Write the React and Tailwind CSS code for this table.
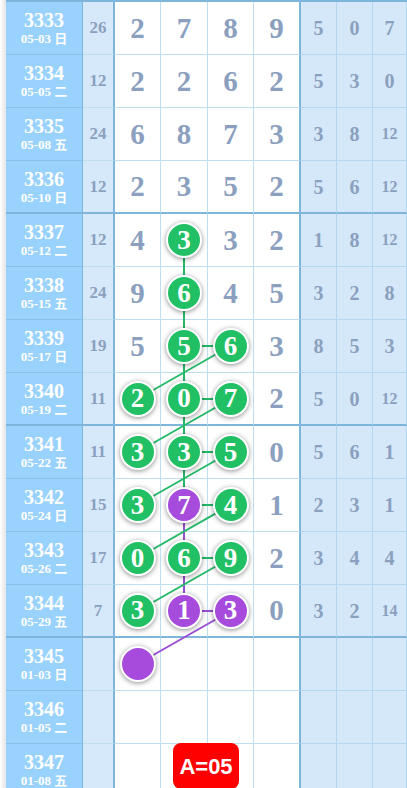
import React from "react";

const rows = [
  { id: "3333", d: "05-03 日", s: "26", n: [2, 7, 8, 9], r: ["5", "0", "7"] },
  { id: "3334", d: "05-05 二", s: "12", n: [2, 2, 6, 2], r: ["5", "3", "0"] },
  { id: "3335", d: "05-08 五", s: "24", n: [6, 8, 7, 3], r: ["3", "8", "12"] },
  { id: "3336", d: "05-10 日", s: "12", n: [2, 3, 5, 2], r: ["5", "6", "12"] },
  { id: "3337", d: "05-12 二", s: "12", n: [4, 3, 3, 2], b: [0, "g", 0, 0], r: ["1", "8", "12"] },
  { id: "3338", d: "05-15 五", s: "24", n: [9, 6, 4, 5], b: [0, "g", 0, 0], r: ["3", "2", "8"] },
  { id: "3339", d: "05-17 日", s: "19", n: [5, 5, 6, 3], b: [0, "g", "g", 0], r: ["8", "5", "3"] },
  { id: "3340", d: "05-19 二", s: "11", n: [2, 0, 7, 2], b: ["g", "g", "g", 0], r: ["5", "0", "12"] },
  { id: "3341", d: "05-22 五", s: "11", n: [3, 3, 5, 0], b: ["g", "g", "g", 0], r: ["5", "6", "1"] },
  { id: "3342", d: "05-24 日", s: "15", n: [3, 7, 4, 1], b: ["g", "p", "g", 0], r: ["2", "3", "1"] },
  { id: "3343", d: "05-26 二", s: "17", n: [0, 6, 9, 2], b: ["g", "g", "g", 0], r: ["3", "4", "4"] },
  { id: "3344", d: "05-29 五", s: "7", n: [3, 1, 3, 0], b: ["g", "p", "p", 0], r: ["3", "2", "14"] },
  { id: "3345", d: "01-03 日", s: "", n: ["", "", "", ""], b: ["pe", 0, 0, 0], r: ["", "", ""] },
  { id: "3346", d: "01-05 二", s: "", n: ["", "", "", ""], r: ["", "", ""] },
  { id: "3347", d: "01-08 五", s: "", n: ["", "", "", ""], r: ["", "", ""] },
];

const serif = { fontFamily: '"Liberation Serif","Noto Sans CJK SC",serif' };

const CX = [137.5, 184, 230.5];
const cy = (i) => 28 + 53 * i;
const G = "#25b968";
const P = "#9b4ed3";

const segs = [];
for (let i = 4; i <= 10; i++) segs.push([CX[1], cy(i), CX[1], cy(i + 1), i >= 9 ? P : G]);
for (let i = 6; i <= 11; i++) segs.push([CX[1], cy(i), CX[2], cy(i), i === 11 ? P : G]);
for (let i = 6; i <= 11; i++) segs.push([CX[2], cy(i), CX[0], cy(i + 1), i === 11 ? P : G]);

function Ball({ kind, v }) {
  const bg = kind === "g" ? "bg-[#22c065]" : "bg-[#a64bdc]";
  return (
    <div
      className={`relative z-10 flex h-[36px] w-[36px] items-center justify-center rounded-full border-2 border-white ${bg} text-[27px] font-bold leading-none text-white shadow-[0_1px_5px_rgba(0,0,0,0.45)]`}
      style={serif}
    >
      {kind === "pe" ? "" : v}
    </div>
  );
}

export default function App() {
  return (
    <div className="relative h-[788px] w-[407px] overflow-hidden bg-white" style={serif}>
      <div className="flex h-[2px]">
        <div className="w-[6px] bg-gradient-to-r from-white to-[#e4e4e4]" />
        <div className="flex-1 bg-[#7db6da]" />
      </div>
      {rows.map((row, i) => {
        const thick = i % 4 === 3;
        const bb = thick ? "border-b-2 border-b-[#7db6da]" : "border-b border-b-[#bfdff0]";
        const bbL = thick ? "border-b-2 border-b-[#7db6da]" : "border-b border-b-[#86c0e6]";
        return (
          <div key={row.id} className="flex h-[53px]">
            <div className="h-full w-[6px] bg-gradient-to-r from-white to-[#e4e4e4]" />
            <div
              className={`box-border flex h-full w-[77px] flex-col items-center justify-center border-r border-r-[#7db6da] bg-[#99d2fc] text-white ${bbL}`}
            >
              <div className="text-[20px] font-bold leading-[22px]">{row.id}</div>
              <div className="text-[13px] font-bold leading-[16px]">{row.d}</div>
            </div>
            <div
              className={`box-border flex h-full w-[32px] items-center justify-center border-r-2 border-r-[#7db6da] bg-[#d6e9fa] text-[17px] font-bold text-[#8ba0bf] ${bb}`}
            >
              {row.s}
            </div>
            {row.n.map((v, c) => {
              const w = c === 0 || c === 2 ? "w-[46px]" : "w-[47px]";
              const br = c === 3 ? "border-r-2 border-r-[#7db6da]" : "border-r border-r-[#bfdff0]";
              const b = row.b && row.b[c];
              return (
                <div
                  key={c}
                  className={`box-border flex h-full ${w} items-center justify-center bg-white ${br} ${bb}`}
                >
                  {b ? (
                    <Ball kind={b} v={v} />
                  ) : (
                    <span className="text-[29px] font-bold leading-none text-[#8ba0bf]">{v}</span>
                  )}
                </div>
              );
            })}
            {row.r.map((v, c) => {
              const w = c === 2 ? "w-[34px]" : "w-[36px]";
              const fs = v.length > 1 ? "text-[16px]" : "text-[20px]";
              return (
                <div
                  key={c}
                  className={`box-border flex h-full ${w} items-center justify-center border-r border-r-[#b3d7ee] bg-[#d5e8f9] ${fs} font-bold leading-none text-[#8ba0bf] ${
                    thick ? "border-b-2 border-b-[#7db6da]" : "border-b border-b-[#b3d7ee]"
                  }`}
                >
                  {v}
                </div>
              );
            })}
          </div>
        );
      })}
      <svg className="pointer-events-none absolute left-0 top-0 z-0" width="407" height="788">
        {segs.map(([x1, y1, x2, y2, col], k) => (
          <line key={k} x1={x1} y1={y1} x2={x2} y2={y2} stroke={col} strokeWidth="2" />
        ))}
      </svg>
      <div
        className="absolute left-[173px] top-[743px] z-20 flex h-[46px] w-[66px] items-center justify-center rounded-lg bg-[#ff0000] text-[22px] font-bold text-white"
        style={{ fontFamily: '"Liberation Sans",Arial,sans-serif' }}
      >
        A=05
      </div>
    </div>
  );
}
